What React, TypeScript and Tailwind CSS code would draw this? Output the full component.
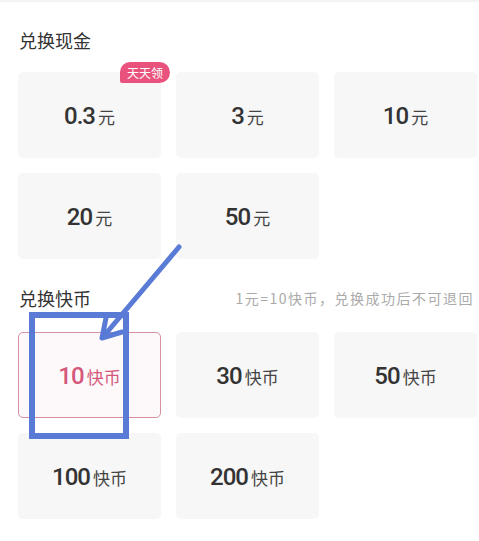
const cash = ["0.3", "3", "10", "20", "50"];
const coins = ["10", "30", "50", "100", "200"];

function Card({
  value,
  unit,
  selected,
  badge,
}: {
  value: string;
  unit: string;
  selected?: boolean;
  badge?: string;
}) {
  return (
    <div
      className={
        "relative h-[86px] rounded-[5px] flex items-center justify-center " +
        (selected ? "bg-[#fdf9fa] border border-[#d7909f]" : "bg-[#f7f7f7]")
      }
    >
      {badge && (
        <div className="absolute -top-[10px] -right-[9px] h-[21px] w-[50px] bg-[#e9527c] text-white text-[12px] leading-[21px] text-center rounded-tl-[10px] rounded-r-[10.5px] rounded-bl-[2px]">
          {badge}
        </div>
      )}
      <div className={"flex items-baseline pt-[2px] " + (selected ? "text-[#d5587c]" : "text-[#333]")}>
        <span className="font-['Roboto'] font-medium text-[24px] tracking-[-1px] leading-none">
          {value}
        </span>
        <span
          className={
            "ml-[3px] text-[17px] leading-none " + (selected ? "text-[#d5587c]" : "text-[#444]")
          }
        >
          {unit}
        </span>
      </div>
    </div>
  );
}

export default function App() {
  return (
    <div className="relative w-[479px] h-[541px] bg-white overflow-hidden font-['Noto_Sans_CJK_SC','Noto_Sans',sans-serif] border-t-2 border-[#f4f4f4]">
      <div className="pl-[19px] pt-[29px] text-[18px] leading-[18px] text-[#333]">
        兑换现金
      </div>
      <div className="mt-[23px] pl-[18px] grid grid-cols-[143px_143px_143px] gap-x-[15px] gap-y-[15px]">
        {cash.map((v, i) => (
          <Card key={v} value={v} unit="元" badge={i === 0 ? "天天领" : undefined} />
        ))}
      </div>

      <div className="mt-[30px] pl-[19px] pr-[5px] flex items-center justify-between">
        <span className="text-[18px] leading-[18px] text-[#333]">兑换快币</span>
        <span className="text-[14px] leading-[18px] tracking-[1.5px] text-[#aaa]">
          1元=10快币，兑换成功后不可退回
        </span>
      </div>
      <div className="mt-[25px] pl-[18px] grid grid-cols-[143px_143px_143px] gap-x-[15px] gap-y-[15px]">
        {coins.map((v, i) => (
          <Card key={v} value={v} unit="快币" selected={i === 0} />
        ))}
      </div>

      <svg
        className="absolute inset-0 pointer-events-none"
        width="479"
        height="541"
        viewBox="0 0 479 541"
      >
        <rect x="32" y="313" width="94" height="121" fill="none" stroke="#5a7bd5" strokeWidth="6" />
        <g stroke="#5a7bd5" strokeWidth="5" strokeLinecap="round" strokeLinejoin="round" fill="none">
          <line x1="179" y1="245" x2="103" y2="335" />
          <polyline points="106,316 102,336 122,330" />
        </g>
      </svg>
    </div>
  );
}
